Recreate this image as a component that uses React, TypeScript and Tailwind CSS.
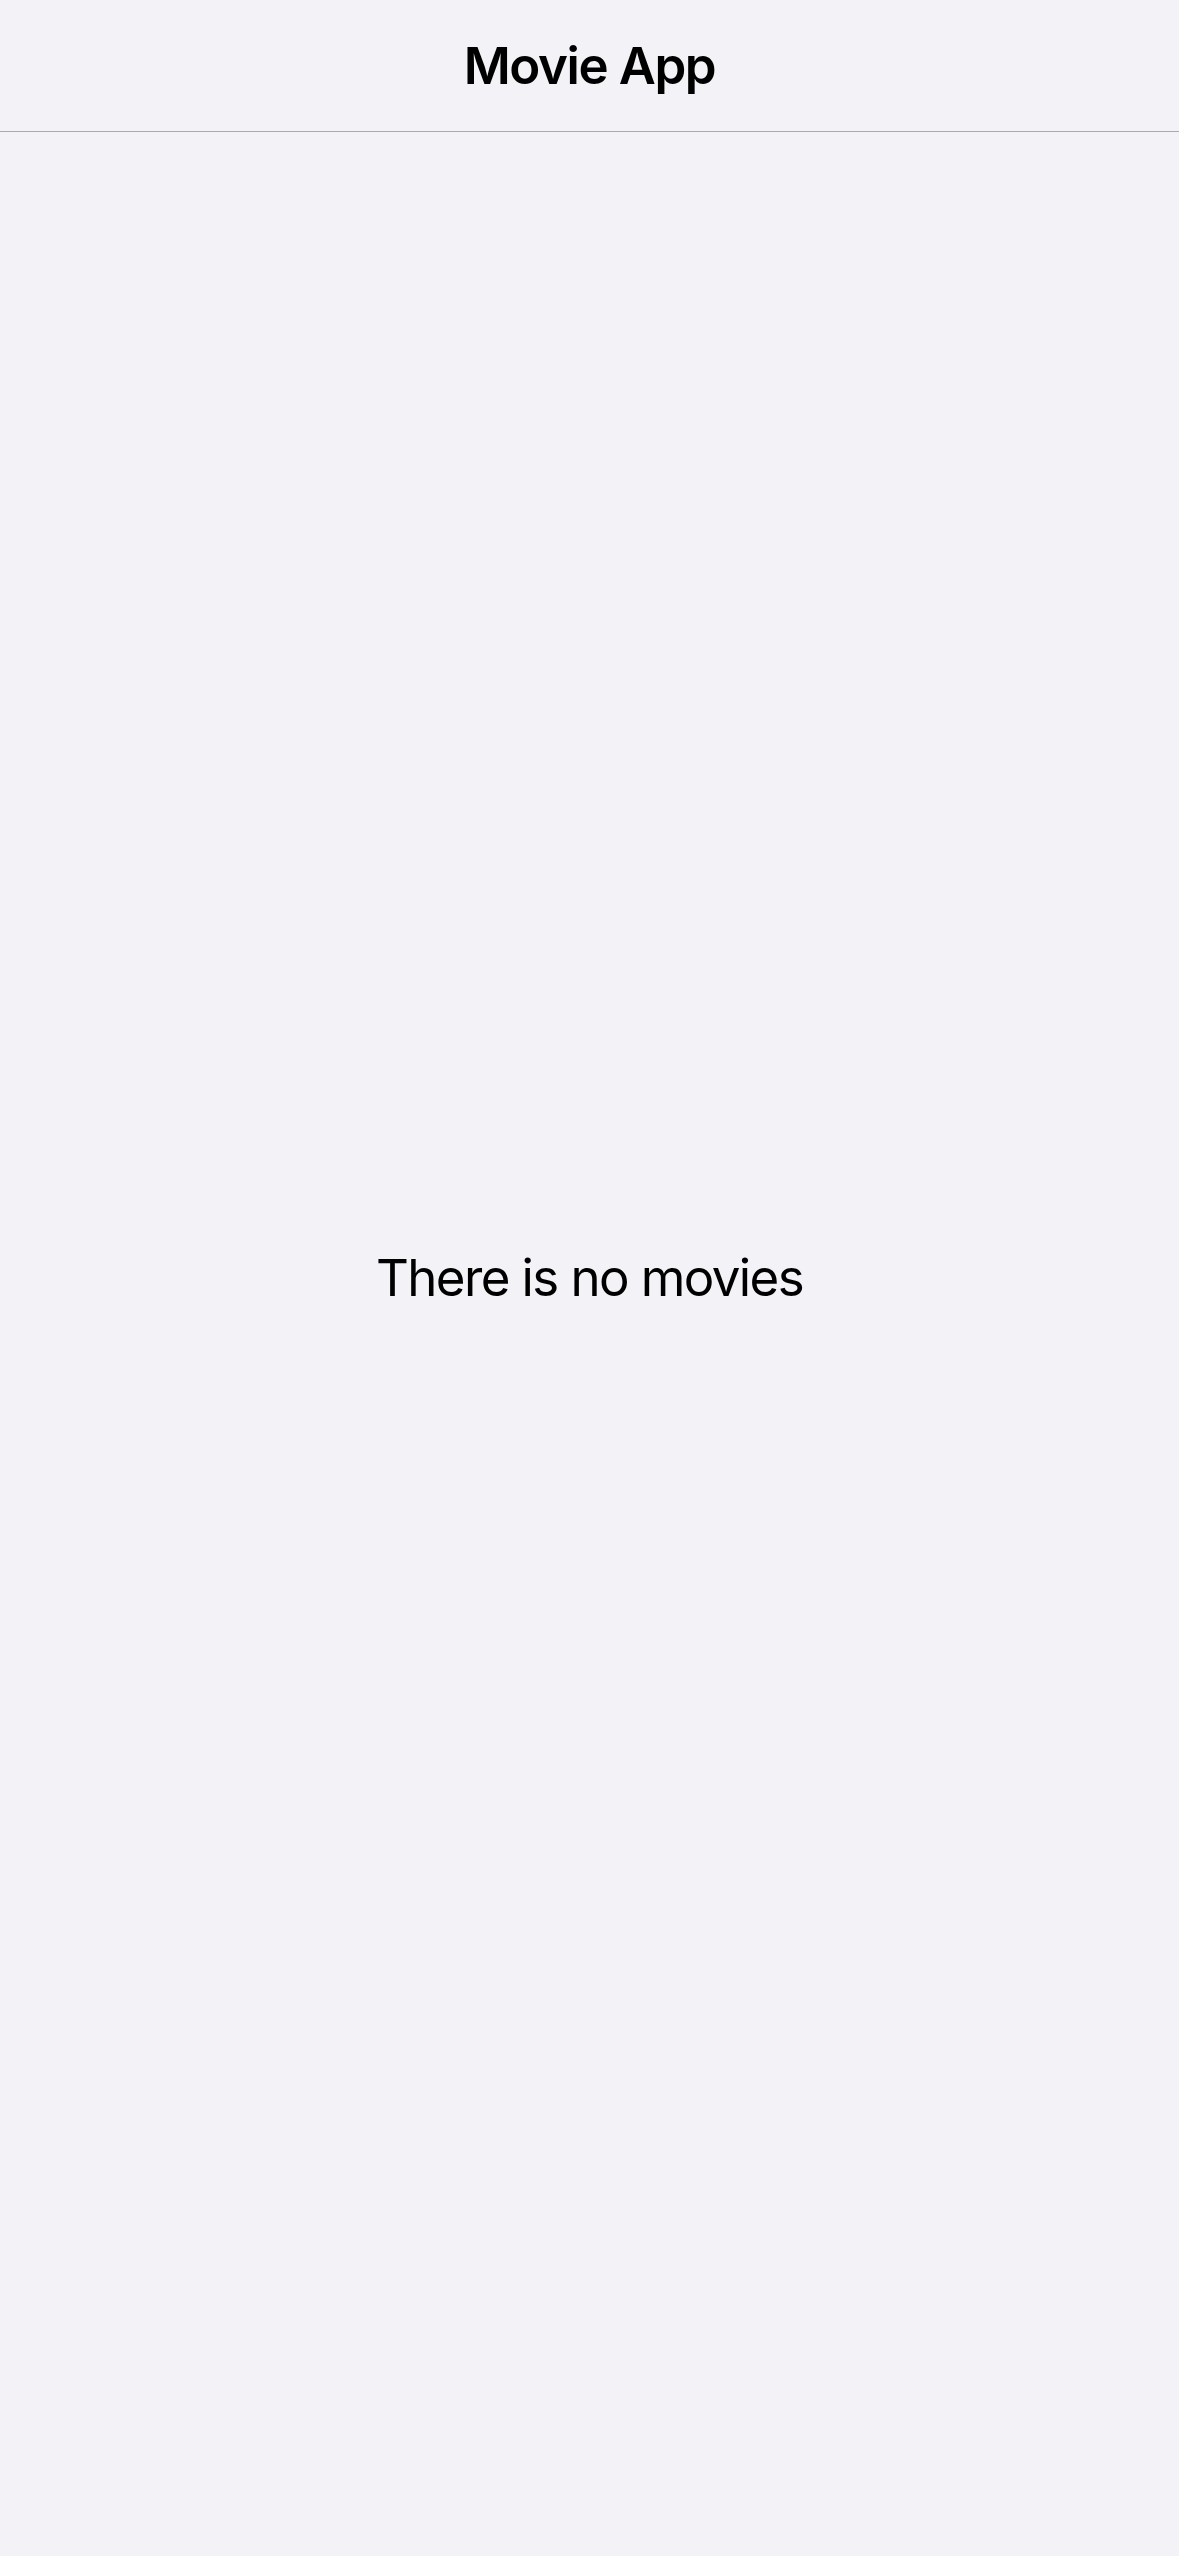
export default function App() {
    return (
        <div className="min-h-screen flex flex-col bg-[#f2f2f7] text-black" style={{ fontFamily: "Inter, 'Noto Sans', sans-serif" }}>
            <header className="h-[132px] flex items-center justify-center border-b border-[#a9a9ae]">
                <h1 className="text-[51px] font-semibold leading-none tracking-[-1.4px]">Movie App</h1>
            </header>
            <main className="flex-1 flex items-center justify-center pb-[132px]">
                <p className="text-[51px] font-normal leading-tight tracking-[-1.6px]">There is no movies</p>
            </main>
        </div>
    )
}
